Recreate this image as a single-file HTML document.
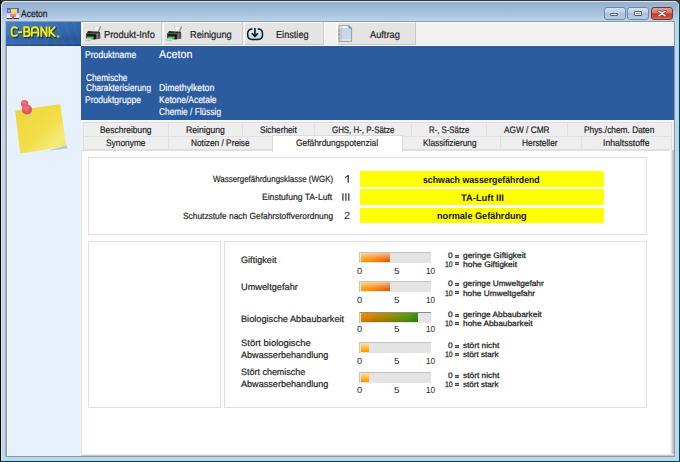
<!DOCTYPE html>
<html><head><meta charset="utf-8">
<style>
*{margin:0;padding:0;box-sizing:border-box}
html,body{width:680px;height:462px;overflow:hidden;background:#0b404c}
body{position:relative;font-family:"Liberation Sans",sans-serif}
.a{position:absolute}
.t{position:absolute;white-space:nowrap;transform-origin:0 0;font-family:"Liberation Sans",sans-serif;text-rendering:geometricPrecision}
</style></head><body>
<!-- desktop corner -->
<div class="a" style="left:0;top:0;width:680px;height:12px;background:#3d3935"></div>
<div class="a" style="left:0;top:0;width:1px;height:462px;background:#0a0806"></div>
<!-- window frame -->
<div class="a" style="left:0;top:0;width:679px;height:461px;border-radius:6px 6px 0 0;background:#c0d6ec;border:1px solid #3a3632;border-left-color:#0a0806;border-bottom:none;border-right:none"></div>
<div class="a" style="left:1px;top:1px;width:678px;height:460px;border-radius:5px 5px 0 0;border:1px solid #d6e8f6;border-bottom-color:#8fe6f5;border-right-color:#8fe6f5"></div>
<div class="a" style="left:2px;top:2px;width:676px;height:19px;border-radius:4px 4px 0 0;background:linear-gradient(#93afcf 0,#a0bbd8 40%,#b3cce7 85%,#bed6ee 100%)"></div>
<!-- title icon -->
<div class="a" style="left:7px;top:8px;width:12px;height:10px;background:linear-gradient(#5a5af2 0,#6464f4 50%,#c9c6fb 55%,#f4f0ff 85%,#ffffff 100%)"></div>
<div class="a" style="left:11px;top:9px;width:6px;height:4px;background:#eeee10"></div>
<div class="a" style="left:8px;top:10px;width:2px;height:2px;background:#a8a8c0"></div>
<div class="a" style="left:10px;top:14px;width:6px;height:3px;background:#e86a78;opacity:.75"></div>
<div class="a" style="left:7px;top:17px;width:12px;height:2px;background:linear-gradient(#f8f8f8 0 50%,#3a3434 50%)"></div>
<div class="a" style="left:12px;top:16px;width:2px;height:3px;background:#d84040;opacity:.8"></div>
<!-- caption buttons -->
<div class="a" style="left:604px;top:7px;width:22px;height:13px;border-radius:3px;border:1px solid #7189a6;background:linear-gradient(#d3e1f0,#bcd0e6 45%,#a9c1dd 50%,#b8cde6)"></div>
<div class="a" style="left:610px;top:12.5px;width:8px;height:3.5px;border-radius:1px;border:1px solid #5a6a80;background:#eef2f8"></div>
<div class="a" style="left:627px;top:7px;width:22px;height:13px;border-radius:3px;border:1px solid #7189a6;background:linear-gradient(#d3e1f0,#bcd0e6 45%,#a9c1dd 50%,#b8cde6)"></div>
<div class="a" style="left:634px;top:11px;width:8px;height:5px;border-radius:1px;border:1px solid #4a5a70;background:#f4f8fc"></div>
<div class="a" style="left:636px;top:13px;width:4px;height:1px;background:#7a90aa"></div>
<div class="a" style="left:651px;top:7px;width:22px;height:13px;border-radius:3px;border:1px solid #6b3a3a;background:linear-gradient(#e4a08e,#d77560 45%,#c4432c 52%,#c84a34 80%,#dc7a62)"></div>
<svg class="a" style="left:657px;top:10px" width="10" height="7" viewBox="0 0 10 7"><path d="M1.8 1.2 L8.2 5.8 M8.2 1.2 L1.8 5.8" stroke="#6a3030" stroke-width="2.8" stroke-linecap="round"/><path d="M1.8 1.2 L8.2 5.8 M8.2 1.2 L1.8 5.8" stroke="#f0f0f0" stroke-width="1.5" stroke-linecap="round"/></svg>
<!-- client area -->
<div class="a" style="left:5px;top:21px;width:1px;height:436px;background:#a9b9ca"></div>
<div class="a" style="left:6px;top:21px;width:669px;height:436px;background:#f0f0f0;border:1px solid #8c98a5"></div>
<div class="a" style="left:81px;top:22px;width:593px;height:1px;background:#fcfcfc"></div>
<div class="a" style="left:81px;top:45px;width:593px;height:1px;background:#fbfbf8"></div>
<!-- sidebar -->
<div class="a" style="left:7px;top:46px;width:74px;height:410px;background:#e7f1fd;border-left:1px solid #fafcff"></div>
<!-- logo -->
<div class="a" style="left:6px;top:22px;width:75px;height:24px;background:linear-gradient(90deg,rgba(255,255,255,.06),rgba(0,0,0,.12)),linear-gradient(#3a78c6 0%,#3470bd 40%,#2a5fa8 70%,#3468b0 88%,#1c4786 100%)"></div>
<div class="a" style="left:6px;top:22px;width:75px;height:24px;background:repeating-linear-gradient(70deg,rgba(255,255,255,0) 0 6px,rgba(255,255,255,.025) 6px 8px);"></div>
<svg class="a" style="left:6px;top:22px" width="75" height="24" viewBox="6 22 75 24">
 <path d="M17 28.2 Q15.5 27.3 14.2 27.3 Q11.6 27.3 11.6 31.7 Q11.6 36.1 14.2 36.1 Q15.5 36.1 17 35.2 M18.9 32.2 L21.2 32.2 M24.2 27.3 L24.2 36.1 L27.6 36.1 Q29.6 36.1 29.6 33.8 Q29.6 31.6 27.4 31.6 L24.2 31.6 M24.2 27.3 L27.2 27.3 Q29.1 27.3 29.1 29.4 Q29.1 31.6 27.2 31.6 M31.8 36.1 L31.8 30.2 Q31.8 27.3 35 27.3 Q38.2 27.3 38.2 30.2 L38.2 36.1 M31.8 32.6 L38.2 32.6 M41.3 36.1 L41.3 27.3 L46.6 36.1 L46.6 27.3 M49.4 27.3 L49.4 36.1 M54.6 27.3 L50.2 31.8 L54.8 36.1" transform="translate(0.9,0.9)" fill="none" stroke="#142a58" stroke-width="2.4" stroke-linecap="round" stroke-linejoin="round" opacity=".85"/>
 <path d="M17 28.2 Q15.5 27.3 14.2 27.3 Q11.6 27.3 11.6 31.7 Q11.6 36.1 14.2 36.1 Q15.5 36.1 17 35.2 M18.9 32.2 L21.2 32.2 M24.2 27.3 L24.2 36.1 L27.6 36.1 Q29.6 36.1 29.6 33.8 Q29.6 31.6 27.4 31.6 L24.2 31.6 M24.2 27.3 L27.2 27.3 Q29.1 27.3 29.1 29.4 Q29.1 31.6 27.2 31.6 M31.8 36.1 L31.8 30.2 Q31.8 27.3 35 27.3 Q38.2 27.3 38.2 30.2 L38.2 36.1 M31.8 32.6 L38.2 32.6 M41.3 36.1 L41.3 27.3 L46.6 36.1 L46.6 27.3 M49.4 27.3 L49.4 36.1 M54.6 27.3 L50.2 31.8 L54.8 36.1" fill="none" stroke="#f2f000" stroke-width="1.9" stroke-linecap="round" stroke-linejoin="round"/>
 <circle cx="58" cy="36.2" r="1.5" fill="#b8b830"/>
</svg>
<!-- toolbar buttons -->
<div class="a" style="left:82px;top:22px;width:80px;height:23px;background:#e4e4e4;border:1px solid;border-color:#fdfdfd #c9c9c9 #c9c9c9 #fdfdfd"></div>
<div class="a" style="left:163px;top:22px;width:80px;height:23px;background:#e4e4e4;border:1px solid;border-color:#fdfdfd #c9c9c9 #c9c9c9 #fdfdfd"></div>
<div class="a" style="left:244px;top:22px;width:80px;height:23px;background:#e4e4e4;border:1px solid;border-color:#fdfdfd #c9c9c9 #c9c9c9 #fdfdfd"></div>
<div class="a" style="left:324px;top:22px;width:13px;height:23px;background:#f0f0f0;border-top:1px solid #fff;border-left:1px solid #fff;border-right:1px solid #fafafa"></div>
<div class="a" style="left:337px;top:22px;width:79px;height:23px;background:#e4e4e4;border:1px solid;border-color:#fdfdfd #c9c9c9 #c9c9c9 #fdfdfd"></div>
<!-- printer icons -->
<svg class="a" style="left:82px;top:24px" width="22" height="20" viewBox="0 0 22 20">
 <path d="M11.6 2.4 L17.4 2.2 L15.8 6.8 L12.4 6.8 Z" fill="#fafafa" stroke="#b8b8b8" stroke-width="0.5"/>
 <path d="M18.6 3 L16.4 7.6" stroke="#8a8a8a" stroke-width="1.1" stroke-linecap="round"/>
 <path d="M6.2 7 L17.6 7.8 L18.2 9.4 L4.4 9.4 Z" fill="#2a2a2a"/>
 <circle cx="11.6" cy="7.9" r="0.6" fill="#40c040"/>
 <path d="M4.2 9.2 L18.2 9.2 L18.2 14.6 L12.5 15.4 L4.2 14.6 Z" fill="#161616"/>
 <path d="M4.4 9.4 L14.2 9.4 L14.2 10.2 L4.4 10.2 Z" fill="#6a6a6a"/>
 <path d="M14.4 9.4 L18 9.4 L18 14.3 L14.4 14.9 Z" fill="#9a9a9a"/>
 <path d="M15.6 9.6 L17.8 9.6 L17.8 14.2 L15.6 14.6 Z" fill="#4a4a4a"/>
 <path d="M5.2 12.4 L11.8 12.4 L11.2 15 L4.2 15.4 Z" fill="#3ccc3c"/>
 <path d="M3.4 14.4 L9.4 14.6 L8.6 16.9 L3.1 16.3 Z" fill="#c4dcf2"/>
 <path d="M3.6 16.2 L8.6 16.8" stroke="#a0a8b0" stroke-width="0.6"/>
</svg>
<svg class="a" style="left:163px;top:24px" width="22" height="20" viewBox="0 0 22 20">
 <path d="M11.6 2.4 L17.4 2.2 L15.8 6.8 L12.4 6.8 Z" fill="#fafafa" stroke="#b8b8b8" stroke-width="0.5"/>
 <path d="M18.6 3 L16.4 7.6" stroke="#8a8a8a" stroke-width="1.1" stroke-linecap="round"/>
 <path d="M6.2 7 L17.6 7.8 L18.2 9.4 L4.4 9.4 Z" fill="#2a2a2a"/>
 <circle cx="11.6" cy="7.9" r="0.6" fill="#40c040"/>
 <path d="M4.2 9.2 L18.2 9.2 L18.2 14.6 L12.5 15.4 L4.2 14.6 Z" fill="#161616"/>
 <path d="M4.4 9.4 L14.2 9.4 L14.2 10.2 L4.4 10.2 Z" fill="#6a6a6a"/>
 <path d="M14.4 9.4 L18 9.4 L18 14.3 L14.4 14.9 Z" fill="#9a9a9a"/>
 <path d="M15.6 9.6 L17.8 9.6 L17.8 14.2 L15.6 14.6 Z" fill="#4a4a4a"/>
 <path d="M5.2 12.4 L11.8 12.4 L11.2 15 L4.2 15.4 Z" fill="#3ccc3c"/>
 <path d="M3.4 14.4 L9.4 14.6 L8.6 16.9 L3.1 16.3 Z" fill="#c4dcf2"/>
 <path d="M3.6 16.2 L8.6 16.8" stroke="#a0a8b0" stroke-width="0.6"/>
</svg>
<!-- Einstieg icon -->
<svg class="a" style="left:244px;top:24px" width="24" height="20" viewBox="0 0 24 20">
 <defs><linearGradient id="eg" x1="0" y1="0" x2="0" y2="1"><stop offset="0" stop-color="#dceef8"/><stop offset="1" stop-color="#a6e2f4"/></linearGradient></defs>
 <path d="M8 5 Q3.6 5 3.6 10.2 Q3.6 15.4 8 15.4 L14 15.4 Q18.6 15.4 18.6 10.2 Q18.6 5 14 5 Z" fill="url(#eg)"/>
 <path d="M8.6 5 Q3.6 5 3.6 10.2 Q3.6 15.4 8 15.4 L14 15.4 Q18.6 15.4 18.6 10.2 Q18.6 5 13.6 5" fill="none" stroke="#1a1a1a" stroke-width="1.5"/>
 <path d="M10.9 4 L10.9 12" stroke="#000" stroke-width="1.5"/>
 <path d="M7.9 9.2 L10.9 12.4 L13.9 9.2" stroke="#000" stroke-width="1.6" fill="none"/>
</svg>
<!-- Auftrag icon -->
<svg class="a" style="left:338px;top:25px" width="15" height="18" viewBox="0 0 15 18">
 <path d="M1 0.6 L11 0.6 L13.6 3.2 L13.6 16.4 L1 16.4 Z" fill="#c4d8ee"/>
 <path d="M1 0.6 L11 0.6 L11.6 3 L1 3 Z" fill="#f6f8fb"/>
 <path d="M1 14.6 L13.6 14.6 L13.6 15.6 L1 15.6 Z" fill="#f8f8f8"/>
 <path d="M1 0.6 L11 0.6 L13.6 3.2 L13.6 16.4 L1 16.4 Z" fill="none" stroke="#8a8a8a" stroke-width="0.8"/>
 <path d="M11 0.8 L11.2 3 L13.4 3.2" fill="none" stroke="#5a6070" stroke-width="0.9"/>
 <path d="M3.3 1 L3.3 16" stroke="#e8a080" stroke-width="0.7"/>
 <path d="M1 5 L1 6 M1 9 L1 10 M1 13 L1 14" stroke="#707070" stroke-width="0.8"/>
</svg>
<!-- header -->
<div class="a" style="left:81px;top:46px;width:593px;height:74px;background:#2c5ca0"></div>
<!-- tab strip -->
<div class="a" style="left:81px;top:120px;width:593px;height:2px;background:#f7f7f3"></div>
<!-- tabs row1 -->
<div class="a" style="left:83px;top:122px;width:86px;height:15px;background:#eeeeee;border:1px solid #e0e0e0"></div>
<div class="a" style="left:168px;top:122px;width:75px;height:15px;background:#eeeeee;border:1px solid #e0e0e0"></div>
<div class="a" style="left:242px;top:122px;width:73px;height:15px;background:#eeeeee;border:1px solid #e0e0e0"></div>
<div class="a" style="left:314px;top:122px;width:98px;height:15px;background:#eeeeee;border:1px solid #e0e0e0"></div>
<div class="a" style="left:411px;top:122px;width:76px;height:15px;background:#eeeeee;border:1px solid #e0e0e0"></div>
<div class="a" style="left:486px;top:122px;width:82px;height:15px;background:#eeeeee;border:1px solid #e0e0e0"></div>
<div class="a" style="left:567px;top:122px;width:105px;height:15px;background:#eeeeee;border:1px solid #e0e0e0"></div>
<!-- tabs row2 -->
<div class="a" style="left:83px;top:136px;width:86px;height:14px;background:#eeeeee;border:1px solid #e0e0e0"></div>
<div class="a" style="left:168px;top:136px;width:105px;height:14px;background:#eeeeee;border:1px solid #e0e0e0"></div>
<div class="a" style="left:402px;top:136px;width:99px;height:14px;background:#eeeeee;border:1px solid #e0e0e0"></div>
<div class="a" style="left:500px;top:136px;width:82px;height:14px;background:#eeeeee;border:1px solid #e0e0e0"></div>
<div class="a" style="left:581px;top:136px;width:91px;height:14px;background:#eeeeee;border:1px solid #e0e0e0"></div>
<!-- panel -->
<div class="a" style="left:81px;top:150px;width:593px;height:306px;background:#fff;border-top:1px solid #dedede;border-left:1px solid #e2e2e2"></div>
<div class="a" style="left:670px;top:150px;width:4px;height:306px;background:linear-gradient(90deg,#fbfbfb,#eeeeee 30%,#d2cec9 62%,#b4b3b1)"></div>
<div class="a" style="left:81px;top:454px;width:593px;height:2px;background:linear-gradient(#ebe9e6 0 50%,#cbc7c2 50%)"></div>
<!-- selected tab -->
<div class="a" style="left:272px;top:135px;width:131px;height:17px;background:#fff;border:1px solid #dcdcdc;border-bottom:none"></div>
<!-- group boxes -->
<div class="a" style="left:88px;top:157px;width:559px;height:78px;border:1px solid #e0e0e0"></div>
<div class="a" style="left:88px;top:241px;width:133px;height:167px;border:1px solid #e0e0e0"></div>
<div class="a" style="left:224px;top:241px;width:423px;height:167px;border:1px solid #e0e0e0"></div>
<!-- yellow bars -->
<div class="a" style="left:360px;top:171px;width:244px;height:15.5px;background:#ffff00"></div>
<div class="a" style="left:360px;top:189px;width:244px;height:15.5px;background:#ffff00"></div>
<div class="a" style="left:360px;top:208px;width:244px;height:15px;background:#ffff00"></div>
<!-- progress bars -->
<div class="a" style="left:359px;top:252px;width:72px;height:11px;background:#e4e4e4;border-top:1px solid #c2c2c2;border-left:1px solid #c6c6c6"></div>
<div class="a" style="left:361px;top:253px;width:29px;height:9px;background:linear-gradient(rgba(255,255,255,.6),rgba(255,255,255,.25) 45%,rgba(255,255,255,0) 90%),linear-gradient(90deg,#ffa000,#f07000 70%,#e45400)"></div>
<div class="a" style="left:359px;top:281px;width:72px;height:11px;background:#e4e4e4;border-top:1px solid #c2c2c2;border-left:1px solid #c6c6c6"></div>
<div class="a" style="left:361px;top:282px;width:29px;height:9px;background:linear-gradient(rgba(255,255,255,.6),rgba(255,255,255,.25) 45%,rgba(255,255,255,0) 90%),linear-gradient(90deg,#ffa000,#f07000 70%,#e45400)"></div>
<div class="a" style="left:359px;top:312px;width:72px;height:11px;background:#e4e4e4;border-top:1px solid #8c8c8c;border-left:1px solid #c6c6c6"></div>
<div class="a" style="left:361px;top:313px;width:57px;height:9px;background:linear-gradient(rgba(0,0,0,0) 20%,rgba(0,0,0,.18)),linear-gradient(90deg,#f49200,#d88800 20%,#a09400 50%,#5aa010 80%,#38900c)"></div>
<div class="a" style="left:359px;top:342px;width:72px;height:11px;background:#e4e4e4;border-top:1px solid #c2c2c2;border-left:1px solid #c6c6c6"></div>
<div class="a" style="left:361px;top:343px;width:8px;height:9px;background:linear-gradient(#ffe2a8,#ffc050 45%,#ffa000 85%,#ff9800)"></div>
<div class="a" style="left:359px;top:372px;width:72px;height:11px;background:#e4e4e4;border-top:1px solid #c2c2c2;border-left:1px solid #c6c6c6"></div>
<div class="a" style="left:361px;top:373px;width:8px;height:9px;background:linear-gradient(#ffe2a8,#ffc050 45%,#ffa000 85%,#ff9800)"></div>
<!-- sticky note -->
<svg class="a" style="left:10px;top:92px" width="64" height="66" viewBox="0 0 64 66">
 <defs>
  <linearGradient id="ng" x1="0" y1="0" x2="1" y2="1">
   <stop offset="0" stop-color="#eed53a"/>
   <stop offset="0.55" stop-color="#f2de48"/>
   <stop offset="0.8" stop-color="#f6ea7c"/>
   <stop offset="1" stop-color="#f0e060"/>
  </linearGradient>
  <radialGradient id="pg" cx="0.4" cy="0.35" r="0.7">
   <stop offset="0" stop-color="#f47a80"/>
   <stop offset="1" stop-color="#dc4050"/>
  </radialGradient>
 </defs>
 <path d="M40 58 Q52 55 56.2 53 L57.6 56.2 Q50 57.5 40 58.5 Z" fill="#a8a090" opacity=".55"/>
 <path d="M5.2 18.8 L50.3 12 L55.8 51.2 Q56.4 53 55 53.6 Q38 58 10.2 61.5 Z" fill="url(#ng)"/>
 <path d="M18.6 21.5 L20.6 25.6" stroke="#a8dcf0" stroke-width="1.3" stroke-linecap="round"/>
 <circle cx="16.9" cy="17.5" r="5.1" fill="url(#pg)"/>
 <circle cx="14.6" cy="11.7" r="3.7" fill="#ee5c66"/>
 <ellipse cx="14" cy="10.8" rx="2" ry="1.2" fill="#f48890" opacity=".6"/>
</svg>
<svg class="a" style="left:338px;top:170px" width="16" height="36" viewBox="338 170 16 36">
 <path d="M348.2 175.2 L348.2 182.6" stroke="#262626" stroke-width="1.25"/>
 <path d="M345.2 177.6 L348.2 175.4" stroke="#262626" stroke-width="1.1"/>
 <path d="M342.9 193.2 L342.9 200.7 M345.9 193.2 L345.9 200.7 M348.8 193.2 L348.8 200.7" stroke="#262626" stroke-width="1.15"/>
</svg>
<div class="t" style="left:21.20px;top:10.20px;font-size:9.8px;line-height:9.8px;font-weight:normal;color:#1e1e1e;letter-spacing:0.000px;-webkit-text-stroke:0.25px #1e1e1e;transform:scaleX(0.8667)">Aceton</div>
<div class="t" style="left:104.31px;top:30.95px;font-size:10.100000000000001px;line-height:10.100000000000001px;font-weight:normal;color:#222;letter-spacing:0.000px;-webkit-text-stroke:0.2px #222;transform:scaleX(0.9247)">Produkt-Info</div>
<div class="t" style="left:190.11px;top:30.95px;font-size:10.100000000000001px;line-height:10.100000000000001px;font-weight:normal;color:#222;letter-spacing:0.000px;-webkit-text-stroke:0.2px #222;transform:scaleX(0.9182)">Reinigung</div>
<div class="t" style="left:276.02px;top:30.95px;font-size:10.100000000000001px;line-height:10.100000000000001px;font-weight:normal;color:#222;letter-spacing:0.000px;-webkit-text-stroke:0.2px #222;transform:scaleX(0.9072)">Einstieg</div>
<div class="t" style="left:369.70px;top:30.65px;font-size:10.100000000000001px;line-height:10.100000000000001px;font-weight:normal;color:#222;letter-spacing:0.000px;-webkit-text-stroke:0.2px #222;transform:scaleX(0.9156)">Auftrag</div>
<div class="t" style="left:85.15px;top:51.22px;font-size:9.9px;line-height:9.9px;font-weight:normal;color:#ffffff;letter-spacing:0.000px;-webkit-text-stroke:0.15px #ffffff;transform:scaleX(0.8713)">Produktname</div>
<div class="t" style="left:159.30px;top:50.03px;font-size:11.299999999999999px;line-height:11.299999999999999px;font-weight:normal;color:#ffffff;letter-spacing:0.000px;-webkit-text-stroke:0.15px #ffffff;transform:scaleX(0.9507)">Aceton</div>
<div class="t" style="left:85.58px;top:73.52px;font-size:9.9px;line-height:9.9px;font-weight:normal;color:#ffffff;letter-spacing:0.000px;-webkit-text-stroke:0.15px #ffffff;transform:scaleX(0.8371)">Chemische</div>
<div class="t" style="left:85.58px;top:84.32px;font-size:9.9px;line-height:9.9px;font-weight:normal;color:#ffffff;letter-spacing:0.000px;-webkit-text-stroke:0.15px #ffffff;transform:scaleX(0.8339)">Charakterisierung</div>
<div class="t" style="left:85.35px;top:95.92px;font-size:9.9px;line-height:9.9px;font-weight:normal;color:#ffffff;letter-spacing:0.000px;-webkit-text-stroke:0.15px #ffffff;transform:scaleX(0.8627)">Produktgruppe</div>
<div class="t" style="left:158.84px;top:84.32px;font-size:9.9px;line-height:9.9px;font-weight:normal;color:#ffffff;letter-spacing:0.000px;-webkit-text-stroke:0.15px #ffffff;transform:scaleX(0.8833)">Dimethylketon</div>
<div class="t" style="left:158.86px;top:95.92px;font-size:9.9px;line-height:9.9px;font-weight:normal;color:#ffffff;letter-spacing:0.000px;-webkit-text-stroke:0.15px #ffffff;transform:scaleX(0.8593)">Ketone/Acetale</div>
<div class="t" style="left:159.08px;top:107.52px;font-size:9.9px;line-height:9.9px;font-weight:normal;color:#ffffff;letter-spacing:0.000px;-webkit-text-stroke:0.15px #ffffff;transform:scaleX(0.8441)">Chemie / Flüssig</div>
<div class="t" style="left:100.03px;top:125.04px;font-size:9.4px;line-height:9.4px;font-weight:normal;color:#1e1e1e;letter-spacing:0.000px;-webkit-text-stroke:0.2px #1e1e1e;transform:scaleX(0.8982)">Beschreibung</div>
<div class="t" style="left:186.31px;top:125.04px;font-size:9.4px;line-height:9.4px;font-weight:normal;color:#1e1e1e;letter-spacing:0.000px;-webkit-text-stroke:0.2px #1e1e1e;transform:scaleX(0.9195)">Reinigung</div>
<div class="t" style="left:260.26px;top:125.04px;font-size:9.4px;line-height:9.4px;font-weight:normal;color:#1e1e1e;letter-spacing:0.000px;-webkit-text-stroke:0.2px #1e1e1e;transform:scaleX(0.8800)">Sicherheit</div>
<div class="t" style="left:332.08px;top:125.04px;font-size:9.4px;line-height:9.4px;font-weight:normal;color:#1e1e1e;letter-spacing:0.000px;-webkit-text-stroke:0.2px #1e1e1e;transform:scaleX(0.8425)">GHS, H-, P-Sätze</div>
<div class="t" style="left:428.78px;top:125.04px;font-size:9.4px;line-height:9.4px;font-weight:normal;color:#1e1e1e;letter-spacing:0.000px;-webkit-text-stroke:0.2px #1e1e1e;transform:scaleX(0.8317)">R-, S-Sätze</div>
<div class="t" style="left:504.00px;top:125.04px;font-size:9.4px;line-height:9.4px;font-weight:normal;color:#1e1e1e;letter-spacing:0.000px;-webkit-text-stroke:0.2px #1e1e1e;transform:scaleX(0.8824)">AGW / CMR</div>
<div class="t" style="left:584.03px;top:125.04px;font-size:9.4px;line-height:9.4px;font-weight:normal;color:#1e1e1e;letter-spacing:0.000px;-webkit-text-stroke:0.2px #1e1e1e;transform:scaleX(0.8885)">Phys./chem. Daten</div>
<div class="t" style="left:105.55px;top:138.34px;font-size:9.4px;line-height:9.4px;font-weight:normal;color:#1e1e1e;letter-spacing:0.000px;-webkit-text-stroke:0.2px #1e1e1e;transform:scaleX(0.8920)">Synonyme</div>
<div class="t" style="left:191.14px;top:138.34px;font-size:9.4px;line-height:9.4px;font-weight:normal;color:#1e1e1e;letter-spacing:0.000px;-webkit-text-stroke:0.2px #1e1e1e;transform:scaleX(0.8862)">Notizen / Preise</div>
<div class="t" style="left:296.05px;top:138.34px;font-size:9.4px;line-height:9.4px;font-weight:normal;color:#1e1e1e;letter-spacing:0.000px;-webkit-text-stroke:0.2px #1e1e1e;transform:scaleX(0.8950)">Gefährdungspotenzial</div>
<div class="t" style="left:422.84px;top:138.34px;font-size:9.4px;line-height:9.4px;font-weight:normal;color:#1e1e1e;letter-spacing:0.000px;-webkit-text-stroke:0.2px #1e1e1e;transform:scaleX(0.8861)">Klassifizierung</div>
<div class="t" style="left:522.14px;top:138.34px;font-size:9.4px;line-height:9.4px;font-weight:normal;color:#1e1e1e;letter-spacing:0.000px;-webkit-text-stroke:0.2px #1e1e1e;transform:scaleX(0.8866)">Hersteller</div>
<div class="t" style="left:603.31px;top:138.34px;font-size:9.4px;line-height:9.4px;font-weight:normal;color:#1e1e1e;letter-spacing:0.000px;-webkit-text-stroke:0.2px #1e1e1e;transform:scaleX(0.9218)">Inhaltsstoffe</div>
<div class="t" style="left:212.60px;top:174.68px;font-size:9.0px;line-height:9.0px;font-weight:normal;color:#1e1e1e;letter-spacing:0.000px;-webkit-text-stroke:0.2px #1e1e1e;transform:scaleX(0.8858)">Wassergefährdungsklasse (WGK)</div>
<div class="t" style="left:262.19px;top:192.88px;font-size:9.0px;line-height:9.0px;font-weight:normal;color:#1e1e1e;letter-spacing:0.000px;-webkit-text-stroke:0.2px #1e1e1e;transform:scaleX(0.9521)">Einstufung TA-Luft</div>
<div class="t" style="left:182.74px;top:212.28px;font-size:9.0px;line-height:9.0px;font-weight:normal;color:#1e1e1e;letter-spacing:0.000px;-webkit-text-stroke:0.2px #1e1e1e;transform:scaleX(0.9296)">Schutzstufe nach Gefahrstoffverordnung</div>
<div class="t" style="left:344.27px;top:210.71px;font-size:10.5px;line-height:10.5px;font-weight:normal;color:#1e1e1e;letter-spacing:0.000px;-webkit-text-stroke:0.0px #1e1e1e;transform:scaleX(1.0526)">2</div>
<div class="t" style="left:423.04px;top:176.36px;font-size:9.5px;line-height:9.5px;font-weight:bold;color:#111;letter-spacing:0.000px;-webkit-text-stroke:0.0px #111;transform:scaleX(0.9209)">schwach wassergefährdend</div>
<div class="t" style="left:460.70px;top:194.06px;font-size:9.5px;line-height:9.5px;font-weight:bold;color:#111;letter-spacing:0.000px;-webkit-text-stroke:0.0px #111;transform:scaleX(0.9837)">TA-Luft III</div>
<div class="t" style="left:436.88px;top:212.36px;font-size:9.5px;line-height:9.5px;font-weight:bold;color:#111;letter-spacing:0.000px;-webkit-text-stroke:0.0px #111;transform:scaleX(0.9598)">normale Gefährdung</div>
<div class="t" style="left:240.80px;top:255.61px;font-size:9.2px;line-height:9.2px;font-weight:normal;color:#1e1e1e;letter-spacing:0.000px;-webkit-text-stroke:0.2px #1e1e1e;transform:scaleX(0.9929)">Giftigkeit</div>
<div class="t" style="left:240.55px;top:283.41px;font-size:9.2px;line-height:9.2px;font-weight:normal;color:#1e1e1e;letter-spacing:0.000px;-webkit-text-stroke:0.2px #1e1e1e;transform:scaleX(1.0027)">Umweltgefahr</div>
<div class="t" style="left:240.55px;top:314.91px;font-size:9.2px;line-height:9.2px;font-weight:normal;color:#1e1e1e;letter-spacing:0.000px;-webkit-text-stroke:0.2px #1e1e1e;transform:scaleX(0.9990)">Biologische Abbaubarkeit</div>
<div class="t" style="left:240.79px;top:339.31px;font-size:9.2px;line-height:9.2px;font-weight:normal;color:#1e1e1e;letter-spacing:0.000px;-webkit-text-stroke:0.2px #1e1e1e;transform:scaleX(1.0269)">Stört biologische</div>
<div class="t" style="left:241.30px;top:351.21px;font-size:9.2px;line-height:9.2px;font-weight:normal;color:#1e1e1e;letter-spacing:0.000px;-webkit-text-stroke:0.2px #1e1e1e;transform:scaleX(0.9892)">Abwasserbehandlung</div>
<div class="t" style="left:240.81px;top:368.41px;font-size:9.2px;line-height:9.2px;font-weight:normal;color:#1e1e1e;letter-spacing:0.000px;-webkit-text-stroke:0.2px #1e1e1e;transform:scaleX(0.9754)">Stört chemische</div>
<div class="t" style="left:241.30px;top:380.21px;font-size:9.2px;line-height:9.2px;font-weight:normal;color:#1e1e1e;letter-spacing:0.000px;-webkit-text-stroke:0.2px #1e1e1e;transform:scaleX(0.9892)">Abwasserbehandlung</div>
<div class="t" style="left:356.54px;top:266.75px;font-size:8.8px;line-height:8.8px;font-weight:normal;color:#1e1e1e;letter-spacing:0.000px;-webkit-text-stroke:0.0px #1e1e1e;transform:scaleX(1.0588)">0</div>
<div class="t" style="left:394.04px;top:266.75px;font-size:8.8px;line-height:8.8px;font-weight:normal;color:#1e1e1e;letter-spacing:0.000px;-webkit-text-stroke:0.0px #1e1e1e;transform:scaleX(1.1250)">5</div>
<div class="t" style="left:426.10px;top:266.75px;font-size:8.8px;line-height:8.8px;font-weight:normal;color:#1e1e1e;letter-spacing:0.000px;-webkit-text-stroke:0.0px #1e1e1e;transform:scaleX(0.9371)">10</div>
<div class="t" style="left:356.54px;top:295.65px;font-size:8.8px;line-height:8.8px;font-weight:normal;color:#1e1e1e;letter-spacing:0.000px;-webkit-text-stroke:0.0px #1e1e1e;transform:scaleX(1.0588)">0</div>
<div class="t" style="left:394.04px;top:295.65px;font-size:8.8px;line-height:8.8px;font-weight:normal;color:#1e1e1e;letter-spacing:0.000px;-webkit-text-stroke:0.0px #1e1e1e;transform:scaleX(1.1250)">5</div>
<div class="t" style="left:426.10px;top:295.65px;font-size:8.8px;line-height:8.8px;font-weight:normal;color:#1e1e1e;letter-spacing:0.000px;-webkit-text-stroke:0.0px #1e1e1e;transform:scaleX(0.9371)">10</div>
<div class="t" style="left:356.54px;top:325.45px;font-size:8.8px;line-height:8.8px;font-weight:normal;color:#1e1e1e;letter-spacing:0.000px;-webkit-text-stroke:0.0px #1e1e1e;transform:scaleX(1.0588)">0</div>
<div class="t" style="left:394.04px;top:325.45px;font-size:8.8px;line-height:8.8px;font-weight:normal;color:#1e1e1e;letter-spacing:0.000px;-webkit-text-stroke:0.0px #1e1e1e;transform:scaleX(1.1250)">5</div>
<div class="t" style="left:426.10px;top:325.45px;font-size:8.8px;line-height:8.8px;font-weight:normal;color:#1e1e1e;letter-spacing:0.000px;-webkit-text-stroke:0.0px #1e1e1e;transform:scaleX(0.9371)">10</div>
<div class="t" style="left:356.54px;top:356.75px;font-size:8.8px;line-height:8.8px;font-weight:normal;color:#1e1e1e;letter-spacing:0.000px;-webkit-text-stroke:0.0px #1e1e1e;transform:scaleX(1.0588)">0</div>
<div class="t" style="left:394.04px;top:356.75px;font-size:8.8px;line-height:8.8px;font-weight:normal;color:#1e1e1e;letter-spacing:0.000px;-webkit-text-stroke:0.0px #1e1e1e;transform:scaleX(1.1250)">5</div>
<div class="t" style="left:426.10px;top:356.75px;font-size:8.8px;line-height:8.8px;font-weight:normal;color:#1e1e1e;letter-spacing:0.000px;-webkit-text-stroke:0.0px #1e1e1e;transform:scaleX(0.9371)">10</div>
<div class="t" style="left:356.54px;top:386.05px;font-size:8.8px;line-height:8.8px;font-weight:normal;color:#1e1e1e;letter-spacing:0.000px;-webkit-text-stroke:0.0px #1e1e1e;transform:scaleX(1.0588)">0</div>
<div class="t" style="left:394.04px;top:386.05px;font-size:8.8px;line-height:8.8px;font-weight:normal;color:#1e1e1e;letter-spacing:0.000px;-webkit-text-stroke:0.0px #1e1e1e;transform:scaleX(1.1250)">5</div>
<div class="t" style="left:426.10px;top:386.05px;font-size:8.8px;line-height:8.8px;font-weight:normal;color:#1e1e1e;letter-spacing:0.000px;-webkit-text-stroke:0.0px #1e1e1e;transform:scaleX(0.9371)">10</div>
<div class="t" style="left:448.13px;top:251.51px;font-size:7.8999999999999995px;line-height:7.8999999999999995px;font-weight:normal;color:#222;letter-spacing:0.000px;-webkit-text-stroke:0.25px #222;transform:scaleX(1.0667)">0</div>
<div class="t" style="left:462.83px;top:251.51px;font-size:7.8999999999999995px;line-height:7.8999999999999995px;font-weight:normal;color:#222;letter-spacing:0.000px;-webkit-text-stroke:0.25px #222;transform:scaleX(1.0610)">geringe Giftigkeit</div>
<div class="t" style="left:445.06px;top:260.91px;font-size:7.8999999999999995px;line-height:7.8999999999999995px;font-weight:normal;color:#222;letter-spacing:0.000px;-webkit-text-stroke:0.25px #222;transform:scaleX(0.8750)">10</div>
<div class="t" style="left:462.56px;top:260.91px;font-size:7.8999999999999995px;line-height:7.8999999999999995px;font-weight:normal;color:#222;letter-spacing:0.000px;-webkit-text-stroke:0.25px #222;transform:scaleX(1.0700)">hohe Giftigkeit</div>
<div class="t" style="left:448.13px;top:280.11px;font-size:7.8999999999999995px;line-height:7.8999999999999995px;font-weight:normal;color:#222;letter-spacing:0.000px;-webkit-text-stroke:0.25px #222;transform:scaleX(1.0667)">0</div>
<div class="t" style="left:462.84px;top:280.11px;font-size:7.8999999999999995px;line-height:7.8999999999999995px;font-weight:normal;color:#222;letter-spacing:0.000px;-webkit-text-stroke:0.25px #222;transform:scaleX(1.0450)">geringe Umweltgefahr</div>
<div class="t" style="left:445.06px;top:289.51px;font-size:7.8999999999999995px;line-height:7.8999999999999995px;font-weight:normal;color:#222;letter-spacing:0.000px;-webkit-text-stroke:0.25px #222;transform:scaleX(0.8750)">10</div>
<div class="t" style="left:462.57px;top:289.51px;font-size:7.8999999999999995px;line-height:7.8999999999999995px;font-weight:normal;color:#222;letter-spacing:0.000px;-webkit-text-stroke:0.25px #222;transform:scaleX(1.0539)">hohe Umweltgefahr</div>
<div class="t" style="left:448.13px;top:310.81px;font-size:7.8999999999999995px;line-height:7.8999999999999995px;font-weight:normal;color:#222;letter-spacing:0.000px;-webkit-text-stroke:0.25px #222;transform:scaleX(1.0667)">0</div>
<div class="t" style="left:462.84px;top:310.81px;font-size:7.8999999999999995px;line-height:7.8999999999999995px;font-weight:normal;color:#222;letter-spacing:0.000px;-webkit-text-stroke:0.25px #222;transform:scaleX(1.0532)">geringe Abbaubarkeit</div>
<div class="t" style="left:445.06px;top:320.31px;font-size:7.8999999999999995px;line-height:7.8999999999999995px;font-weight:normal;color:#222;letter-spacing:0.000px;-webkit-text-stroke:0.25px #222;transform:scaleX(0.8750)">10</div>
<div class="t" style="left:462.57px;top:320.31px;font-size:7.8999999999999995px;line-height:7.8999999999999995px;font-weight:normal;color:#222;letter-spacing:0.000px;-webkit-text-stroke:0.25px #222;transform:scaleX(1.0559)">hohe Abbaubarkeit</div>
<div class="t" style="left:448.13px;top:342.01px;font-size:7.8999999999999995px;line-height:7.8999999999999995px;font-weight:normal;color:#222;letter-spacing:0.000px;-webkit-text-stroke:0.25px #222;transform:scaleX(1.0667)">0</div>
<div class="t" style="left:462.84px;top:342.01px;font-size:7.8999999999999995px;line-height:7.8999999999999995px;font-weight:normal;color:#222;letter-spacing:0.000px;-webkit-text-stroke:0.25px #222;transform:scaleX(1.0588)">stört nicht</div>
<div class="t" style="left:445.06px;top:351.31px;font-size:7.8999999999999995px;line-height:7.8999999999999995px;font-weight:normal;color:#222;letter-spacing:0.000px;-webkit-text-stroke:0.25px #222;transform:scaleX(0.8750)">10</div>
<div class="t" style="left:462.84px;top:351.31px;font-size:7.8999999999999995px;line-height:7.8999999999999995px;font-weight:normal;color:#222;letter-spacing:0.000px;-webkit-text-stroke:0.25px #222;transform:scaleX(1.0248)">stört stark</div>
<div class="t" style="left:448.13px;top:372.01px;font-size:7.8999999999999995px;line-height:7.8999999999999995px;font-weight:normal;color:#222;letter-spacing:0.000px;-webkit-text-stroke:0.25px #222;transform:scaleX(1.0667)">0</div>
<div class="t" style="left:462.84px;top:372.01px;font-size:7.8999999999999995px;line-height:7.8999999999999995px;font-weight:normal;color:#222;letter-spacing:0.000px;-webkit-text-stroke:0.25px #222;transform:scaleX(1.0588)">stört nicht</div>
<div class="t" style="left:445.06px;top:381.31px;font-size:7.8999999999999995px;line-height:7.8999999999999995px;font-weight:normal;color:#222;letter-spacing:0.000px;-webkit-text-stroke:0.25px #222;transform:scaleX(0.8750)">10</div>
<div class="t" style="left:462.84px;top:381.31px;font-size:7.8999999999999995px;line-height:7.8999999999999995px;font-weight:normal;color:#222;letter-spacing:0.000px;-webkit-text-stroke:0.25px #222;transform:scaleX(1.0248)">stört stark</div>
<div class="a" style="left:455px;top:255px;width:4px;height:3px;border-top:1px solid #4a4a4a;border-bottom:1px solid #4a4a4a;background:#9a9a9a"></div>
<div class="a" style="left:455px;top:262px;width:4px;height:3px;border-top:1px solid #4a4a4a;border-bottom:1px solid #4a4a4a;background:#9a9a9a"></div>
<div class="a" style="left:455px;top:283px;width:4px;height:3px;border-top:1px solid #4a4a4a;border-bottom:1px solid #4a4a4a;background:#9a9a9a"></div>
<div class="a" style="left:455px;top:291px;width:4px;height:3px;border-top:1px solid #4a4a4a;border-bottom:1px solid #4a4a4a;background:#9a9a9a"></div>
<div class="a" style="left:455px;top:314px;width:4px;height:3px;border-top:1px solid #4a4a4a;border-bottom:1px solid #4a4a4a;background:#9a9a9a"></div>
<div class="a" style="left:455px;top:322px;width:4px;height:3px;border-top:1px solid #4a4a4a;border-bottom:1px solid #4a4a4a;background:#9a9a9a"></div>
<div class="a" style="left:455px;top:345px;width:4px;height:3px;border-top:1px solid #4a4a4a;border-bottom:1px solid #4a4a4a;background:#9a9a9a"></div>
<div class="a" style="left:455px;top:353px;width:4px;height:3px;border-top:1px solid #4a4a4a;border-bottom:1px solid #4a4a4a;background:#9a9a9a"></div>
<div class="a" style="left:455px;top:375px;width:4px;height:3px;border-top:1px solid #4a4a4a;border-bottom:1px solid #4a4a4a;background:#9a9a9a"></div>
<div class="a" style="left:455px;top:383px;width:4px;height:3px;border-top:1px solid #4a4a4a;border-bottom:1px solid #4a4a4a;background:#9a9a9a"></div>
</body></html>
